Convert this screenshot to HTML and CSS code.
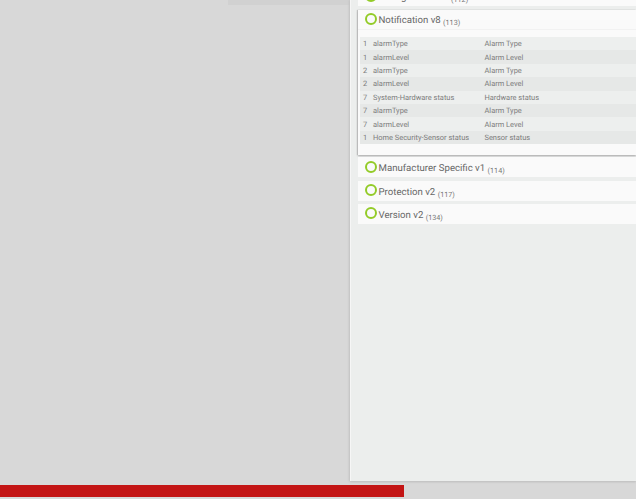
FILE: index.html
```html
<!DOCTYPE html>
<html lang="en">
<head>
<meta charset="utf-8">
<title>Device classes</title>
<link rel="stylesheet" href="styles.css">
</head>
<body>
<div class="page">
  <div class="main">
    <div class="left"><div class="left-bar"></div></div>
    <div class="panel">
      <section class="card card-clipped">
        <h3 class="card-head"><span class="ring"></span>Configuration v4 <small>(112)</small></h3>
      </section>
      <section class="card card-open">
        <h3 class="card-head"><span class="ring"></span>Notification v8 <small>(113)</small></h3>
        <table class="params">
          <tr><td class="c-num">1</td><td class="c-name">alarmType</td><td>Alarm Type</td></tr>
          <tr><td class="c-num">1</td><td class="c-name">alarmLevel</td><td>Alarm Level</td></tr>
          <tr><td class="c-num">2</td><td class="c-name">alarmType</td><td>Alarm Type</td></tr>
          <tr><td class="c-num">2</td><td class="c-name">alarmLevel</td><td>Alarm Level</td></tr>
          <tr><td class="c-num">7</td><td class="c-name">System-Hardware status</td><td>Hardware status</td></tr>
          <tr><td class="c-num">7</td><td class="c-name">alarmType</td><td>Alarm Type</td></tr>
          <tr><td class="c-num">7</td><td class="c-name">alarmLevel</td><td>Alarm Level</td></tr>
          <tr><td class="c-num">1</td><td class="c-name">Home Security-Sensor status</td><td>Sensor status</td></tr>
        </table>
      </section>
      <section class="card">
        <h3 class="card-head"><span class="ring"></span>Manufacturer Specific v1 <small>(114)</small></h3>
      </section>
      <section class="card">
        <h3 class="card-head"><span class="ring"></span>Protection v2 <small>(117)</small></h3>
      </section>
      <section class="card">
        <h3 class="card-head"><span class="ring"></span>Version v2 <small>(134)</small></h3>
      </section>
    </div>
  </div>
  <div class="progress"><div class="progress-fill"></div></div>
</div>
</body>
</html>
```

FILE: styles.css
```css
* { box-sizing: border-box; }
html, body { margin: 0; height: 100%; overflow: hidden; }
body {
  background: #d8d8d8;
  font-family: Roboto, "Liberation Sans", sans-serif;
  text-rendering: geometricPrecision;
}
.page { display: flex; flex-direction: column; width: 636px; height: 499px; }
.main { display: flex; height: 481px; flex: none; }
.left { width: 350px; flex: none; padding-left: 228px; }
.left-bar { height: 5px; background: #d1d1d1; }
.panel {
  flex: 1;
  display: flex;
  flex-direction: column;
  gap: 3.4px;
  padding-left: 7px;
  background: #eceeed;
  border-left: 1px solid #f6f6f6;
  box-shadow: -1px 0 2px #c4c4c4, 0 1px 2px #bdbdbd;
  overflow: hidden;
}
.card { background: #fafafa; flex: none; }
.card-clipped { margin-top: -14px; margin-bottom: 0.6px; }
.card-open {
  padding-bottom: 11px;
  margin-bottom: -1.4px;
  box-shadow: 0 1px 2px #a8a8a8, -1px 0 1px #c4c4c4;
}
.card-head {
  display: flex;
  align-items: center;
  height: 20px;
  margin: 0;
  padding: 3px 0 0 7px;
  font-size: 9.65px;
  line-height: 17px;
  font-weight: 400;
  color: #666;
  white-space: pre;
}
.card-head small { font-size: 7.2px; line-height: 8px; color: #777; position: relative; top: 2.5px; }
.ring {
  width: 12px;
  height: 12px;
  margin-right: 1.5px;
  border: 2px solid #93cb28;
  border-radius: 50%;
  position: relative;
  top: -2px;
}
.card-open .card-head { margin-bottom: 7px; border-bottom: 1px solid #f2f2f2; }
.params {
  width: 276px;
  margin-left: 2px;
  border-collapse: collapse;
  font-size: 7.45px;
  color: #7c7c7c;
  table-layout: fixed;
}
.params tr { height: 13.4px; background: #edefee; }
.params tr:nth-child(even) { background: #e6e8e7; }
.params td { padding: 0; white-space: nowrap; line-height: 13px; }
.params .c-num { width: 13px; padding-left: 3px; }
.params .c-name { width: 111.5px; }
.progress { margin-top: 4px; height: 12px; flex: none; }
.progress-fill { width: 404px; height: 12px; background: #c31414; }
```
